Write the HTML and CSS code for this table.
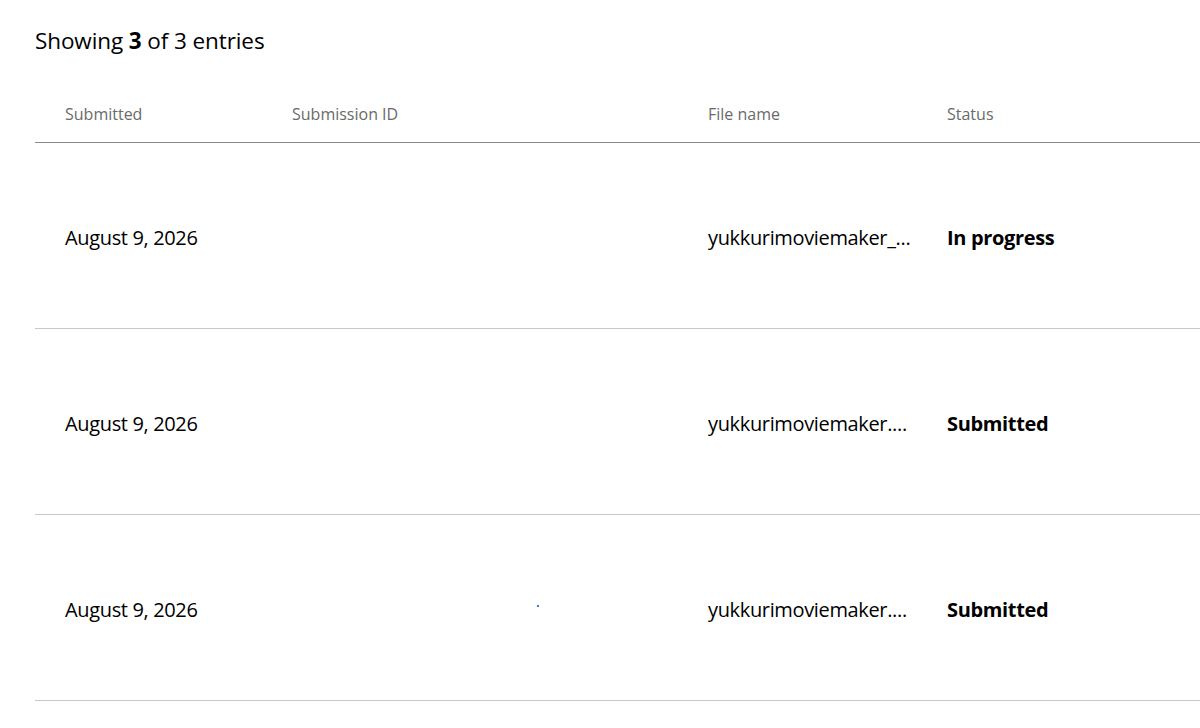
FILE: index.html
```html
<!DOCTYPE html>
<html>
<head>
<meta charset="utf-8">
<link rel="stylesheet" href="styles.css">
</head>
<body>
<div class="page">
  <h2 class="summary">Showing <b>3</b> of 3 entries</h2>
  <div class="table">
    <div class="row head">
      <div class="cell">Submitted</div>
      <div class="cell">Submission ID</div>
      <div class="cell">File name</div>
      <div class="cell">Status</div>
    </div>
    <div class="row">
      <div class="cell">August 9, 2026</div>
      <div class="cell"></div>
      <div class="cell">yukkurimoviemaker_...</div>
      <div class="cell status">In progress</div>
    </div>
    <div class="row">
      <div class="cell">August 9, 2026</div>
      <div class="cell"></div>
      <div class="cell">yukkurimoviemaker....</div>
      <div class="cell status">Submitted</div>
    </div>
    <div class="row">
      <div class="cell">August 9, 2026</div>
      <div class="cell id"><span class="dot"></span></div>
      <div class="cell">yukkurimoviemaker....</div>
      <div class="cell status">Submitted</div>
    </div>
  </div>
</div>
</body>
</html>
```
FILE: styles.css
```css
html, body {
  margin: 0;
  padding: 0;
  background: #fff;
}
body {
  font-family: "Open Sans", "Noto Sans", sans-serif;
  color: #000;
  overflow: hidden;
}
.page {
  padding: 24px 0 0 35px;
}
.summary {
  margin: 0;
  font-size: 22.5px;
  font-weight: 400;
  line-height: 34px;
  letter-spacing: -0.1px;
}
.summary b {
  font-weight: 700;
}
.table {
  margin-top: 24px;
}
.row {
  display: grid;
  box-sizing: border-box;
  grid-template-columns: 227px 416px 239px 1fr;
  height: 186px;
  align-items: center;
  border-bottom: 1px solid #c8c8c8;
}
.row.head {
  height: 61px;
  border-bottom: 1px solid #8a8a8a;
}
.cell {
  padding-left: 30px;
  padding-top: 3px;
  font-size: 20px;
  letter-spacing: -0.35px;
  white-space: nowrap;
}
.head .cell {
  font-size: 16px;
  color: #6a6a6a;
  letter-spacing: 0;
  padding-top: 4px;
}
.status {
  font-weight: 700;
}
.id {
  position: relative;
  height: 100%;
  padding-top: 0;
}
.dot {
  position: absolute;
  left: 275px;
  top: 90px;
  width: 2px;
  height: 2px;
  background: #3a7bd5;
}
```
